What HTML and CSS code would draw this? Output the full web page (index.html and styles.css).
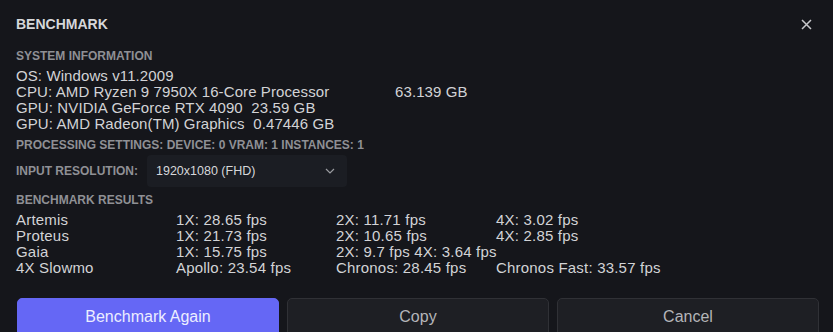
FILE: index.html
```html
<!DOCTYPE html>
<html>
<head>
  <title>Benchmark</title>
  <link rel="stylesheet" href="styles.css">
</head>
<body>
  <div class="dialog">
    <div class="header">
      <h1>BENCHMARK</h1>
      <button class="close" aria-label="Close">
        <svg width="11" height="11" viewBox="0 0 11 11"><path d="M1 1L10 10M10 1L1 10" stroke="#c8c8cc" stroke-width="1.5"/></svg>
      </button>
    </div>

    <h2>SYSTEM INFORMATION</h2>
    <div class="info">
      <div>OS: Windows v11.2009</div>
      <div><span class="cpu">CPU: AMD Ryzen 9 7950X 16-Core Processor</span>63.139 GB</div>
      <div>GPU: NVIDIA GeForce RTX 4090  23.59 GB</div>
      <div>GPU: AMD Radeon(TM) Graphics  0.47446 GB</div>
    </div>

    <h2 class="settings">PROCESSING SETTINGS: DEVICE: 0 VRAM: 1 INSTANCES: 1</h2>

    <div class="form-group">
      <label>INPUT RESOLUTION:</label>
      <div class="select">
        <span>1920x1080 (FHD)</span>
        <svg width="10" height="6" viewBox="0 0 10 6"><path d="M1 1L5 5L9 1" fill="none" stroke="#9a9ba0" stroke-width="1.2"/></svg>
      </div>
    </div>

    <h2>BENCHMARK RESULTS</h2>
    <div class="results">
      <span>Artemis</span><span>1X: 28.65 fps</span><span>2X: 11.71 fps</span><span>4X: 3.02 fps</span>
      <span>Proteus</span><span>1X: 21.73 fps</span><span>2X: 10.65 fps</span><span>4X: 2.85 fps</span>
      <span>Gaia</span><span>1X: 15.75 fps</span><span class="wide">2X: 9.7 fps 4X: 3.64 fps</span>
      <span>4X Slowmo</span><span>Apollo: 23.54 fps</span><span>Chronos: 28.45 fps</span><span>Chronos Fast: 33.57 fps</span>
    </div>

    <div class="buttons">
      <button class="primary">Benchmark Again</button>
      <button>Copy</button>
      <button>Cancel</button>
    </div>
  </div>
</body>
</html>
```

FILE: styles.css
```css
/* dark benchmark dialog */
body {
  margin: 0;
  padding: 0;
  background-color: #15161b;
  font-family: "Liberation Sans", Arial, sans-serif;
  color: #d2d3d6;
  overflow: hidden;
}

.dialog {
  padding: 14px 14px 0 16px;
}

.header {
  display: flex;
  justify-content: space-between;
  align-items: center;
  height: 20px;
}

.header h1 {
  margin: 0;
  font-size: 14px;
  font-weight: bold;
  color: #d6d7da;
}

.close {
  background: none;
  border: none;
  padding: 0;
  width: 11px;
  height: 11px;
  margin-right: 7px;
  cursor: pointer;
}

.close svg {
  display: block;
}

h2 {
  margin: 0;
  font-size: 12px;
  font-weight: bold;
  color: #8f9095;
  line-height: 14px;
}

.header + h2 {
  margin-top: 15px;
}

.info {
  margin-top: 5px;
  font-size: 15px;
  line-height: 16px;
  letter-spacing: 0.1px;
}

.info div {
  white-space: pre;
}

.cpu {
  display: inline-block;
  width: 379px;
}

.settings {
  margin-top: 6px;
}

.form-group {
  display: flex;
  align-items: center;
  margin-top: 3px;
}

.form-group label {
  font-size: 12px;
  font-weight: bold;
  color: #8f9095;
  width: 131px;
}

.select {
  width: 200px;
  height: 32px;
  box-sizing: border-box;
  padding: 0 12px 0 9px;
  background-color: #1b1d23;
  border-radius: 4px;
  display: flex;
  justify-content: space-between;
  align-items: center;
  font-size: 12.5px;
  color: #d6d7da;
}

.form-group + h2 {
  margin-top: 6px;
}

.results {
  display: grid;
  grid-template-columns: 160px 160px 160px 200px;
  margin-top: 5px;
  font-size: 15px;
  line-height: 16px;
  letter-spacing: 0.2px;
  white-space: nowrap;
}

.results .wide {
  grid-column: span 2;
}

.buttons {
  display: grid;
  grid-template-columns: 1fr 1fr 1fr;
  gap: 8px;
  margin-top: 22px;
  padding-left: 1px;
}

.buttons button {
  height: 44px;
  border-radius: 5px;
  border: 1px solid #303136;
  background-color: #1e1f24;
  color: #b4b5b9;
  font-family: "Liberation Sans", Arial, sans-serif;
  font-size: 16px;
  padding: 0 0 6px;
  cursor: pointer;
}

.buttons button.primary {
  background-color: #6567f5;
  border-color: #6567f5;
  color: #eceeff;
}
```
